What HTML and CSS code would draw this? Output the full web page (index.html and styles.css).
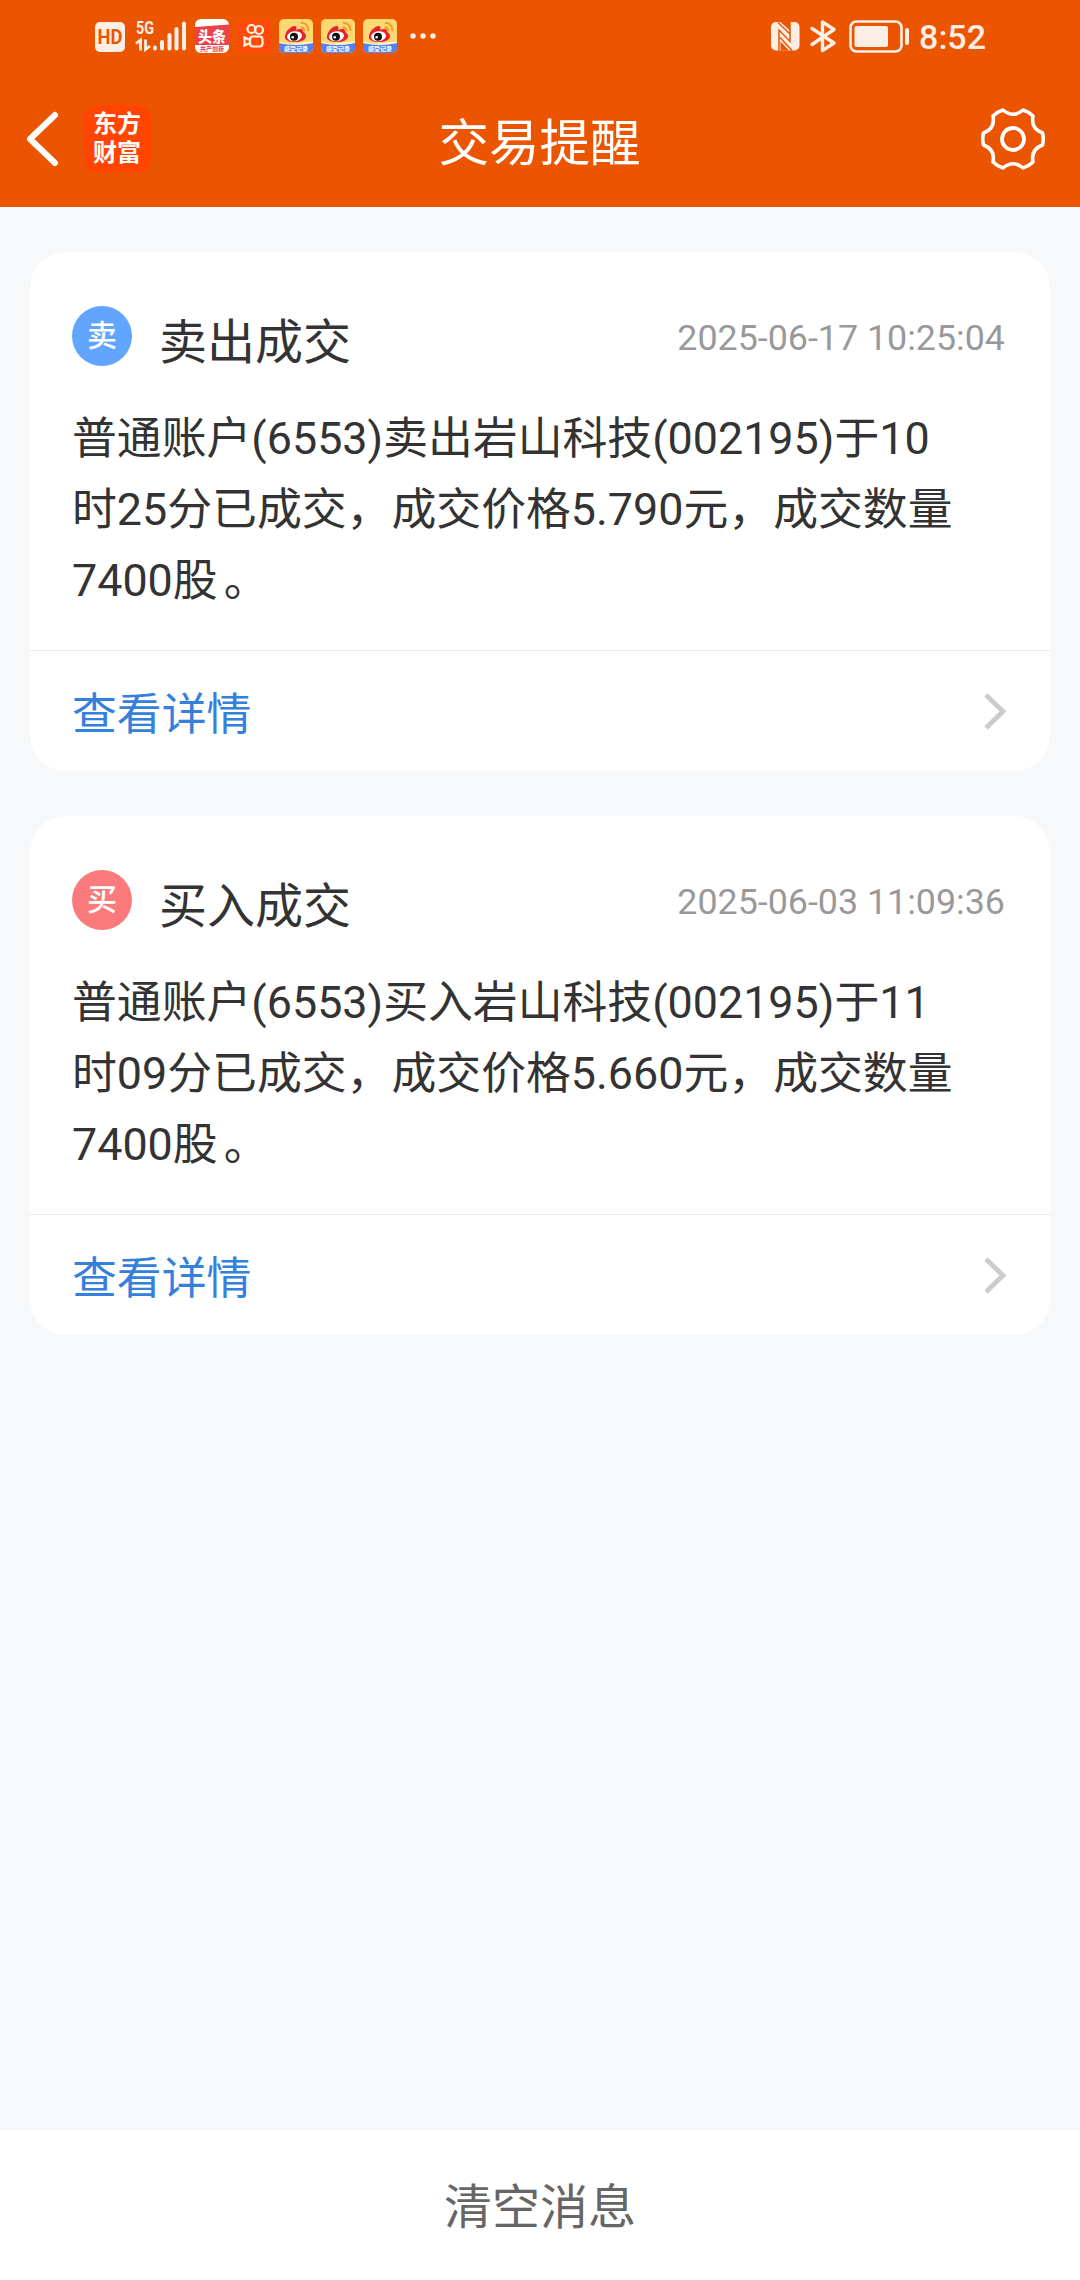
FILE: index.html
```
<!DOCTYPE html>
<html lang="zh-CN">
<head>
    <meta charset="UTF-8">
    <meta name="viewport" content="width=device-width, initial-scale=1.0">
    <title>交易提醒</title>
    <link rel="stylesheet" href="styles.css">
</head>
<body>

<div class="page">
    <div class="top">
        <!-- System status bar -->
        <div class="status-bar">
            <div class="status-left">
                <svg class="hd" width="30" height="30" viewBox="0 0 30 30">
                    <rect width="30" height="30" rx="5" fill="#fdeee6"/>
                    <text x="15" y="22" text-anchor="middle" textLength="25" lengthAdjust="spacingAndGlyphs" class="hd-text">HD</text>
                </svg>
                <svg class="signal" width="52" height="34" viewBox="0 0 52 34">
                    <text x="0" y="15" textLength="18" lengthAdjust="spacingAndGlyphs" class="net-text">5G</text>
                    <g stroke="#fdeee6" stroke-width="2.8" fill="none">
                        <path d="M0 24.500l4.500-3.500v10.500M9.500 20.500v10l4.500-3.500"/>
                    </g>
                    <g stroke="#fdeee6" stroke-width="4" stroke-linecap="round">
                        <path d="M19 28.500v1M26 23v6.500M33.500 16v13.500M40.500 10v19.500M48 4.500v25"/>
                    </g>
                </svg>
                <svg class="toutiao" width="34" height="34" viewBox="0 0 34 34">
                    <rect width="34" height="34" rx="6" fill="#fff"/>
                    <path d="M0 8L34 5.500v20.500H0z" fill="#f0404a"/>
                    <text x="17" y="22.500" text-anchor="middle" textLength="28" lengthAdjust="spacingAndGlyphs" class="tt-text">头条</text>
                    <text x="17" y="32" text-anchor="middle" class="tt-small">共产创新</text>
                </svg>
                <svg class="kuaishou" width="34" height="34" viewBox="0 0 34 34">
                    <rect width="34" height="34" fill="#ff4a0a"/>
                    <g fill="none" stroke="#fff3e0" stroke-width="2.200">
                        <circle cx="14.500" cy="10" r="4"/>
                        <circle cx="22" cy="11" r="4"/>
                        <rect x="13" y="17.500" width="12.500" height="10" rx="3"/>
                        <path d="M13 21l-5.500-2.500v8l5.500-2.500"/>
                    </g>
                </svg>
                <svg class="weibo" width="34" height="34" viewBox="0 0 34 34">
                    <defs>
                        <symbol id="weibo" viewBox="0 0 34 34">
                            <rect width="34" height="34" rx="5" fill="#ffd873"/>
                            <path d="M0 24q17 3 34 0v5a5 5 0 0 1-5 5H5a5 5 0 0 1-5-5z" fill="#5680f0"/>
                            <path d="M0 22.500q8 3 17 1.500t17-1.500V24q-9 2-17 2T0 24z" fill="#fff3c8"/>
                            <path d="M6 17C7 11 13 6.500 16 7c2 .5 1.500 3 1 4 3-1.500 7-1.500 7 1 0 1.500 3 2 3 5 0 4-5 6-11 6S5 21 6 17z" fill="#e5232c"/>
                            <ellipse cx="15.500" cy="17.300" rx="7.500" ry="5" fill="#fff" transform="rotate(-8 15.500 17.300)"/>
                            <circle cx="15" cy="17.700" r="4" fill="#111"/>
                            <circle cx="13.700" cy="18.200" r="1.300" fill="#fff"/>
                            <path d="M21.500 8.500q4-.5 4 4M22 4q7-.5 7.500 8" fill="none" stroke="#f39a24" stroke-width="2"/>
                            <text x="17" y="32" text-anchor="middle" class="wb-text">感受记录</text>
                        </symbol>
                    </defs>
                    <use href="#weibo"/>
                </svg>
                <svg class="weibo" width="34" height="34"><use href="#weibo"/></svg>
                <svg class="weibo" width="34" height="34"><use href="#weibo"/></svg>
                <svg class="dots" width="26" height="6" viewBox="0 0 26 6" fill="#fdeee6">
                    <circle cx="3" cy="3" r="2.700"/>
                    <circle cx="13" cy="3" r="2.700"/>
                    <circle cx="23" cy="3" r="2.700"/>
                </svg>
            </div>
            <div class="status-right">
                <svg class="nfc" width="29" height="29" viewBox="0 0 29 29">
                    <rect width="28.500" height="28.500" rx="5" fill="#fdeee6"/>
                    <path d="M8 28.500V8l11 11.500V0M7 .5l12.500 12M9 15.500l12 13" fill="none" stroke="#eb5500" stroke-width="1.500"/>
                    <path d="M9.500 0H19v8.500zM9.500 28.500V19.500l8.500 9z" fill="#eb5500"/>
                </svg>
                <svg class="bluetooth" width="26" height="33" viewBox="0 0 26 33" fill="none" stroke="#fdeee6" stroke-width="3.400" stroke-linecap="round" stroke-linejoin="round">
                    <path d="M2 8.500L24 23 12.500 30.500V2L24 9.500 2 24.500"/>
                </svg>
                <svg class="battery" width="60" height="33" viewBox="0 0 60 33">
                    <rect x="1.500" y="1.500" width="51" height="30" rx="6" fill="none" stroke="#fdeee6" stroke-width="2.600"/>
                    <rect x="5.500" y="6" width="33.500" height="21" rx="2" fill="#fdeee6"/>
                    <rect x="56" y="8" width="4" height="17" rx="2" fill="#fdeee6"/>
                </svg>
                <div class="clock">8:52</div>
            </div>
        </div>

        <!-- Title bar -->
        <div class="nav">
            <div class="nav-left">
                <svg class="back" width="34" height="56" viewBox="0 0 34 56">
                    <path d="M29 4L4 28 29 52" fill="none" stroke="#fff" stroke-width="6" stroke-linecap="round" stroke-linejoin="round"/>
                </svg>
                <div class="logo">
                    <span>东方</span>
                    <span>财富</span>
                </div>
            </div>
            <div class="nav-title">交易提醒</div>
            <svg class="gear" width="64" height="62" viewBox="0 0 64 62" fill="none" stroke="#fff">
                <path d="M22 2Q32 10.500 42 2Q47.500 3.600 52 8Q49.500 20.500 61.500 25Q63 31 61.500 37Q49.500 41.500 52 54Q47.500 58.400 42 60Q32 51.500 22 60Q16.500 58.400 12 54Q14.500 41.500 2.500 37Q1 31 2.500 25Q14.500 20.500 12 8Q16.500 3.600 22 2z" stroke-width="3.600" stroke-linejoin="round"/>
                <circle cx="32" cy="31" r="11" stroke-width="3.800"/>
            </svg>
        </div>
    </div>

    <div class="message-list">
        <div class="card">
            <div class="card-body">
                <div class="card-head">
                    <div class="badge sell">卖</div>
                    <div class="card-title">卖出成交</div>
                    <div class="card-time">2025-06-17 10:25:04</div>
                </div>
                <div class="card-text">普通账户(6553)卖出岩山科技(002195)于10<br>时25分已成交，成交价格5.790元，成交数量<br>7400股<span class="stop">。</span></div>
            </div>
            <div class="card-link">
                <span>查看详情</span>
                <svg width="22" height="37" viewBox="0 0 22 37">
                    <path d="M2 2l17 16.500L2 35" fill="none" stroke="#ccc" stroke-width="4.800"/>
                </svg>
            </div>
        </div>

        <div class="card">
            <div class="card-body">
                <div class="card-head">
                    <div class="badge buy">买</div>
                    <div class="card-title">买入成交</div>
                    <div class="card-time">2025-06-03 11:09:36</div>
                </div>
                <div class="card-text">普通账户(6553)买入岩山科技(002195)于11<br>时09分已成交，成交价格5.660元，成交数量<br>7400股<span class="stop">。</span></div>
            </div>
            <div class="card-link">
                <span>查看详情</span>
                <svg width="22" height="37" viewBox="0 0 22 37">
                    <path d="M2 2l17 16.500L2 35" fill="none" stroke="#ccc" stroke-width="4.800"/>
                </svg>
            </div>
        </div>
    </div>

    <div class="clear-bar">清空消息</div>
</div>

</body>
</html>
```
FILE: styles.css
```
* {
    box-sizing: border-box;
}
body {
    margin: 0;
    font-family: Roboto, "Noto Sans CJK SC", sans-serif;
    background-color: #f7f8fa;
    color: #333;
}
svg {
    display: block;
    flex-shrink: 0;
    overflow: visible;
}
.page {
    display: flex;
    flex-direction: column;
    height: 2280px;
}
.top {
    height: 207px;
    background-color: #eb5500;
    color: #fff;
}
.status-bar {
    display: flex;
    justify-content: space-between;
    height: 72px;
    padding: 0 94px 0 95px;
}
.status-left,
.status-right {
    display: flex;
    align-items: center;
}
.hd {
    margin-top: 2px;
}
.signal {
    margin-left: 11px;
}
.toutiao {
    margin-left: 7px;
}
.kuaishou {
    margin-left: 8px;
}
.weibo {
    margin-left: 8px;
}
.dots {
    margin-left: 13px;
}
.bluetooth {
    margin-left: 10px;
}
.battery {
    margin-left: 13px;
}
.clock {
    margin-left: 10px;
    padding-top: 2px;
    font-size: 34px;
    font-weight: 500;
    color: #fdeee6;
}
.hd-text {
    font-size: 20px;
    font-weight: 700;
    fill: #eb5500;
}
.net-text {
    font-size: 19px;
    font-weight: 700;
    fill: #fdeee6;
}
.tt-text {
    font-size: 15px;
    font-weight: 900;
    fill: #fff;
}
.tt-small {
    font-size: 6px;
    font-weight: 700;
    fill: #d8404a;
}
.wb-text {
    font-size: 6px;
    font-weight: 700;
    fill: #fff;
}
.nav {
    display: grid;
    grid-template-columns: 1fr auto 1fr;
    align-items: center;
    height: 135px;
    padding: 0 35px 2px 26px;
}
.nav-left {
    display: flex;
    align-items: center;
    gap: 23px;
}
.logo {
    display: flex;
    flex-direction: column;
    justify-content: center;
    width: 68px;
    height: 68px;
    border-radius: 14px;
    background-color: #ff4500;
    text-align: center;
    font-size: 24px;
    font-weight: 700;
    line-height: 29px;
}
.nav-title {
    padding-left: 8px;
    font-size: 50.5px;
}
.gear {
    justify-self: end;
}
.message-list {
    flex: 1;
    display: flex;
    flex-direction: column;
    gap: 45px;
    padding: 45px 30px 0;
}
.card {
    border-radius: 36px;
    background-color: #fff;
}
.card-body {
    height: 399px;
    padding: 54px 45px 0 42px;
    border-bottom: 1px solid #ebecee;
}
.card-head {
    display: flex;
    align-items: center;
    height: 60px;
}
.badge {
    width: 60px;
    height: 60px;
    border-radius: 50%;
    color: #fff;
    font-size: 30px;
    font-weight: 500;
    line-height: 60px;
    text-align: center;
}
.badge.sell {
    background-color: #62a5ff;
}
.badge.buy {
    background-color: #fb7b7d;
}
.card-title {
    margin-left: 27px;
    padding-top: 3px;
    font-size: 48px;
}
.card-time {
    margin-left: auto;
    padding-top: 3px;
    font-size: 35.8px;
    color: #999;
}
.card-text {
    margin-top: 37px;
    font-size: 44.85px;
    line-height: 71px;
    white-space: nowrap;
}
.stop {
    padding-left: 6px;
}
.card-link {
    display: flex;
    justify-content: space-between;
    align-items: center;
    height: 120px;
    padding: 0 44px 2px 42px;
    font-size: 44.85px;
    color: #3480dc;
}
.card-link svg {
    margin-top: 2px;
}
.clear-bar {
    height: 150px;
    padding-top: 3px;
    background-color: #fff;
    color: #666;
    font-size: 48px;
    line-height: 150px;
    text-align: center;
}
```
